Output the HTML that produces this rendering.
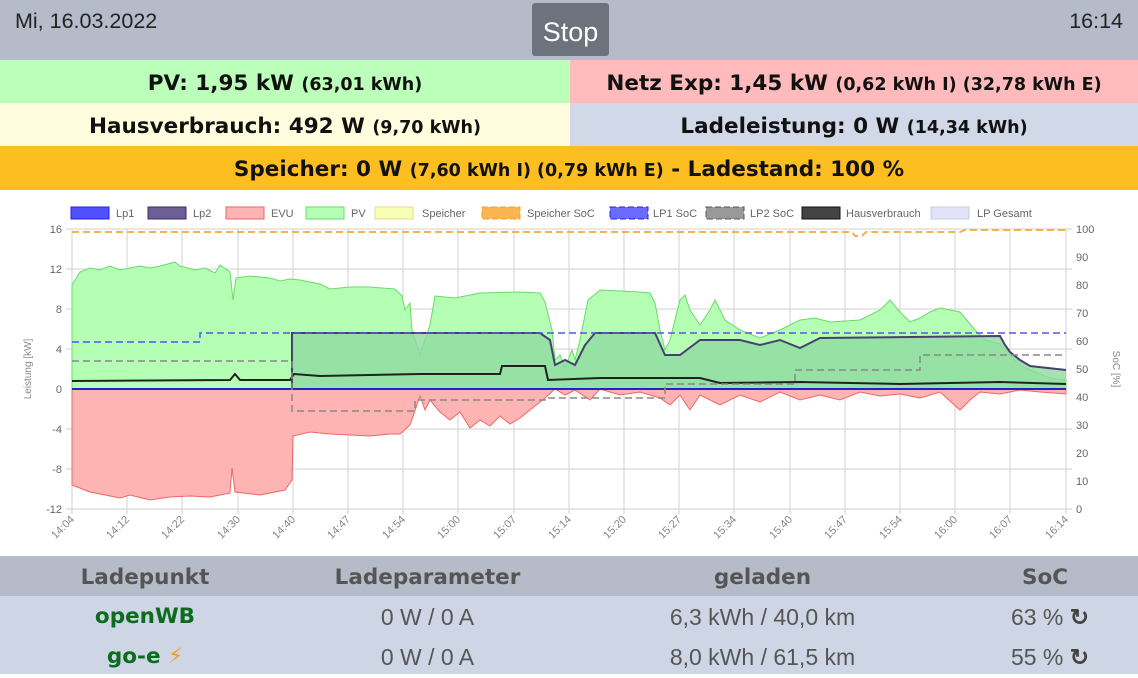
<!DOCTYPE html>
<html><head><meta charset="utf-8"><style>
*{margin:0;padding:0;box-sizing:border-box}
body{width:1138px;height:674px;overflow:hidden;font-family:"Liberation Sans","DejaVu Sans",sans-serif;background:#fff;position:relative}
.top{position:absolute;left:0;top:0;width:1138px;height:60px;background:#b5bbc9}
.date{position:absolute;left:15px;top:9px;font-size:21.5px;color:#222}
.time{position:absolute;right:15px;top:9px;font-size:21.5px;color:#222}
.stop{position:absolute;left:532px;top:3px;width:77px;height:53px;background:#6c737c;border-radius:3px;color:#fff;font-size:27px;text-align:center;line-height:59px}
.cell{position:absolute;height:43px;text-align:center;font-weight:bold;font-size:21.5px;line-height:47px;color:#111;white-space:nowrap;font-family:"DejaVu Sans",sans-serif}
.cell small{font-size:17.5px}
.tbl{position:absolute;left:0;width:1138px;font-size:21.5px;color:#555;font-family:"DejaVu Sans",sans-serif}
.tbl div{position:absolute;top:0;text-align:center;white-space:nowrap}
.n{font-family:"Liberation Sans",sans-serif;font-size:23px}
</style></head><body>
<div class="top"><div class="date">Mi, 16.03.2022</div><div class="stop">Stop</div><div class="time">16:14</div></div>
<div class="cell" style="left:0;top:60px;width:570px;background:#bbffbb">PV: 1,95 kW <small>(63,01 kWh)</small></div>
<div class="cell" style="left:570px;top:60px;width:568px;background:#ffbbbb">Netz Exp: 1,45 kW <small>(0,62 kWh I) (32,78 kWh E)</small></div>
<div class="cell" style="left:0;top:103px;width:570px;background:#fffddd">Hausverbrauch: 492 W <small>(9,70 kWh)</small></div>
<div class="cell" style="left:570px;top:103px;width:568px;background:#d1d8e7">Ladeleistung: 0 W <small>(14,34 kWh)</small></div>
<div class="cell" style="left:0;top:146px;width:1138px;height:44px;background:#fcbe20">Speicher: 0 W <small>(7,60 kWh I) (0,79 kWh E)</small> - Ladestand: 100 %</div>

<svg style="position:absolute;left:0;top:190px" width="1138" height="366" viewBox="0 190 1138 366" font-family="Liberation Sans,sans-serif">
<g font-size="11" fill="#666">
<rect x="71" y="207" width="38" height="12" fill="#5050ff" stroke="#2020ee"/><text x="116" y="217">Lp1</text>
<rect x="148" y="207" width="38" height="12" fill="#6e5e96" stroke="#3a2d5e"/><text x="193" y="217">Lp2</text>
<rect x="226" y="207" width="38" height="12" fill="#ffb4b4" stroke="#e66"/><text x="271" y="217">EVU</text>
<rect x="306" y="207" width="38" height="12" fill="#b4ffb4" stroke="#6d6"/><text x="351" y="217">PV</text>
<rect x="375" y="207" width="38" height="12" fill="#f8ffb4" stroke="#e6d890"/><text x="422" y="217">Speicher</text>
<rect x="482" y="207" width="38" height="12" fill="#fbb44f" stroke="#f5a030" stroke-dasharray="6,3"/><text x="527" y="217">Speicher SoC</text>
<rect x="610" y="207" width="38" height="12" fill="#6b6bff" stroke="#2222ee" stroke-dasharray="6,3"/><text x="653" y="217">LP1 SoC</text>
<rect x="706" y="207" width="38" height="12" fill="#999" stroke="#555" stroke-dasharray="6,3"/><text x="750" y="217">LP2 SoC</text>
<rect x="802" y="207" width="38" height="12" fill="#444" stroke="#111"/><text x="846" y="217">Hausverbrauch</text>
<rect x="931" y="207" width="38" height="12" fill="#e2e2fa" stroke="#ccd"/><text x="977" y="217">LP Gesamt</text>
</g>
<g stroke="#d0d0d0" stroke-width="1">
<path d="M66 229H1072M66 269H1072M66 309H1072M66 349H1072M66 429H1072M66 469H1072M66 509H1072"/>
<path d="M72 229V514M127 229V514M182 229V514M238 229V514M293 229V514M348 229V514M403 229V514M458 229V514M514 229V514M569 229V514M624 229V514M679 229V514M734 229V514M790 229V514M845 229V514M900 229V514M955 229V514M1010 229V514M1066 229V514"/>
</g>
<path d="M72 389V285L80 272L90 268L100 270L110 266L120 270L130 268L140 266L150 268L160 266L175 262L180 266L195 270L205 268L215 273L220 265L230 272L233 300L236 278L250 276L270 278L280 281L290 279L300 280L320 284L330 289L350 287L370 287L395 289L402 296L405 310L410 303L412 330L420 355L430 325L435 296L455 298L480 293L520 292L540 293L545 302L552 330L555 360L560 355L565 368L572 350L575 360L580 340L588 300L600 290L620 291L640 292L650 293L655 303L660 330L665 350L670 340L680 300L685 295L690 310L700 325L710 310L715 300L725 320L740 330L760 338L780 330L800 320L815 318L830 322L860 320L880 310L890 300L900 312L910 322L920 318L930 312L940 308L960 312L965 318L975 330L985 340L1000 344L1010 355L1020 365L1030 370L1050 378L1066 380V389Z" fill="#b4ffb4" stroke="#66dd66" stroke-width="1"/>
<path d="M72 389V485L90 492L100 494L120 498L130 495L150 500L170 497L190 496L210 497L230 493L232 468L235 492L260 495L285 490L292 480L293 436L310 432L330 434L350 435L370 436L390 434L400 434L410 425L420 396L425 410L430 400L440 412L450 420L460 412L470 428L480 420L490 426L500 416L510 424L520 418L530 410L545 398L555 389L565 395L575 390L590 400L600 389L620 395L640 392L660 398L670 405L680 395L690 410L700 395L720 405L740 395L760 402L780 392L800 400L820 395L840 400L860 392L880 396L900 394L920 398L940 392L960 410L970 400L980 392L1000 394L1020 390L1040 392L1066 394V389Z" fill="#ffb4b4" stroke="#ee6666" stroke-width="1"/>
<path d="M292 389V333L540 333L550 340L555 365L565 360L575 365L585 345L595 333L655 333L665 355L680 355L700 340L740 340L760 345L780 340L800 348L820 338L1000 336L1005 345L1010 352L1020 360L1030 366L1066 370V389Z" fill="#8ed9a0" fill-opacity=".8"/>
<path d="M292 389V333L540 333L550 340L555 365L565 360L575 365L585 345L595 333L655 333L665 355L680 355L700 340L740 340L760 345L780 340L800 348L820 338L1000 336L1005 345L1010 352L1020 360L1030 366L1066 370" fill="none" stroke="#4a4070" stroke-width="2"/>
<path d="M72 381L230 380L235 374L240 380L290 380L294 374L320 376L420 374L500 374L502 366L545 366L548 380L600 378L700 378L720 383L800 382L900 384L1000 382L1066 384" fill="none" stroke="#222" stroke-width="2"/>
<path d="M72 389H1066" stroke="#2222cc" stroke-width="2"/>
<path d="M72 342H200V333H1066" fill="none" stroke="#5555ee" stroke-width="1.5" stroke-dasharray="7,4"/>
<path d="M72 361H292V411H415V400H545V398H665V384H795V370H920V355H1066" fill="none" stroke="#888" stroke-width="1.5" stroke-dasharray="7,4"/>
<path d="M72 232H852L855 236H862L866 232H960L965 230H1066" fill="none" stroke="#f5b04f" stroke-width="2" stroke-dasharray="7,4"/>
<g font-size="11" fill="#666" text-anchor="end">
<text x="62" y="233">16</text><text x="62" y="273">12</text><text x="62" y="313">8</text><text x="62" y="353">4</text><text x="62" y="393">0</text><text x="62" y="433">-4</text><text x="62" y="473">-8</text><text x="62" y="513">-12</text>
</g>
<g font-size="11" fill="#666">
<text x="1076" y="233">100</text><text x="1076" y="261">90</text><text x="1076" y="289">80</text><text x="1076" y="317">70</text><text x="1076" y="345">60</text><text x="1076" y="373">50</text><text x="1076" y="401">40</text><text x="1076" y="429">30</text><text x="1076" y="457">20</text><text x="1076" y="485">10</text><text x="1076" y="513">0</text>
</g>
<text transform="translate(31 369) rotate(-90)" font-size="10" fill="#888" text-anchor="middle">Leistung [kW]</text>
<text transform="translate(1113 369) rotate(90)" font-size="10" fill="#888" text-anchor="middle">SoC [%]</text>
<g font-size="11" fill="#888" text-anchor="end">
<text transform="translate(75 520) rotate(-45)">14:04</text><text transform="translate(130 520) rotate(-45)">14:12</text><text transform="translate(185 520) rotate(-45)">14:22</text><text transform="translate(241 520) rotate(-45)">14:30</text><text transform="translate(296 520) rotate(-45)">14:40</text><text transform="translate(351 520) rotate(-45)">14:47</text><text transform="translate(406 520) rotate(-45)">14:54</text><text transform="translate(461 520) rotate(-45)">15:00</text><text transform="translate(517 520) rotate(-45)">15:07</text><text transform="translate(572 520) rotate(-45)">15:14</text><text transform="translate(627 520) rotate(-45)">15:20</text><text transform="translate(682 520) rotate(-45)">15:27</text><text transform="translate(737 520) rotate(-45)">15:34</text><text transform="translate(793 520) rotate(-45)">15:40</text><text transform="translate(848 520) rotate(-45)">15:47</text><text transform="translate(903 520) rotate(-45)">15:54</text><text transform="translate(958 520) rotate(-45)">16:00</text><text transform="translate(1013 520) rotate(-45)">16:07</text><text transform="translate(1069 520) rotate(-45)">16:14</text>
</g>
</svg>

<div class="tbl" style="top:556px;height:40px;background:#b5bbc9;font-weight:bold;line-height:43px">
<div style="left:0;width:290px">Ladepunkt</div><div style="left:285px;width:285px">Ladeparameter</div><div style="left:620px;width:285px">geladen</div><div style="left:960px;width:170px">SoC</div>
</div>
<div class="tbl" style="top:596px;height:78px;background:#ced6e6;line-height:42px">
<div style="left:0;width:290px;font-weight:bold;color:#0b6b1e">openWB</div><div class="n" style="left:285px;width:285px">0 W / 0 A</div><div class="n" style="left:620px;width:285px">6,3 kWh / 40,0 km</div><div class="n" style="left:960px;width:180px">63 % <b style="color:#444">&#8635;</b></div>
<div style="top:40px;left:0;width:290px;font-weight:bold;color:#0b6b1e">go-e <span style="color:#f39a1e">&#9889;</span></div><div class="n" style="top:40px;left:285px;width:285px">0 W / 0 A</div><div class="n" style="top:40px;left:620px;width:285px">8,0 kWh / 61,5 km</div><div class="n" style="top:40px;left:960px;width:180px">55 % <b style="color:#444">&#8635;</b></div>
</div>
</body></html>
